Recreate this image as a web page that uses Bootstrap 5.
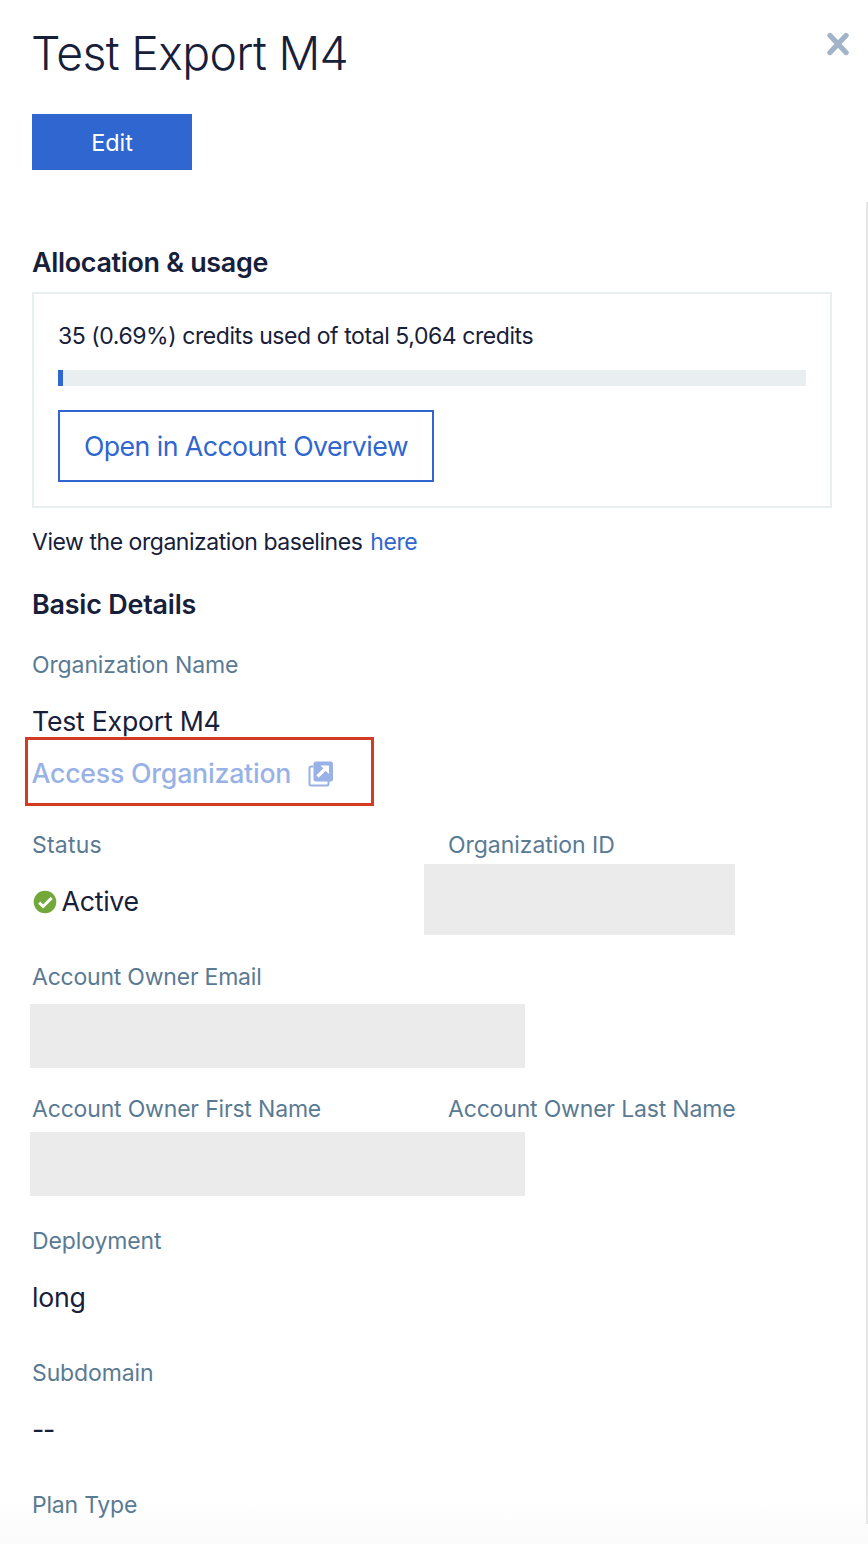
<!DOCTYPE html>
<html lang="en">
<head>
<meta charset="utf-8">
<meta name="viewport" content="width=device-width, initial-scale=1">
<title>Test Export M4</title>
<link href="https://cdn.jsdelivr.net/npm/bootstrap@5.3.0/dist/css/bootstrap.min.css" rel="stylesheet">
<style>
body{font-family:Inter,"Liberation Sans",sans-serif;color:#17203a;background:#fff;font-size:23px;line-height:32px;overflow:hidden}
.panel{width:868px;height:1544px;overflow:hidden;background:linear-gradient(#fff 1495px,#fbfbfb 1544px)}
.head{height:202px;padding:25px 18px 0 32px}
.panel-title{font-size:46.4px;font-weight:300;line-height:56px;letter-spacing:-.67px;margin-left:-1px}
.close-icon{margin-top:6px}
.btn{--bs-btn-border-radius:0;--bs-btn-border-width:2px}
.btn-edit{width:160px;height:56px;margin-top:33px;background:#3066d0;border:0;color:#fff;font-size:23.4px;padding:2px 0 0}
.btn-open{width:376px;height:72px;border-color:#3066d0;color:#3066d0;font-size:26.7px;letter-spacing:-.55px;padding:0}
.scroller{height:1322px;border-right:2px solid #e6e6e6;padding:44px 34px 0 32px}
.line{height:32px;white-space:nowrap}
.sect{font-size:26.9px;font-weight:600;line-height:30px;letter-spacing:-.3px;margin:0;padding-top:1px}
.usage{width:800px;height:216px;border:2px solid #e9eef1;border-radius:0;padding:26px 24px 0;margin-top:14px;background:transparent}
.credits{letter-spacing:-.43px}
.progress{height:16px;border-radius:0;background:#e9eef1;margin:18px 0 24px}
.progress-bar{background:#3066d0}
.baselines{margin-top:18px;letter-spacing:-.46px}
.lnk{color:#3066d0;text-decoration:none;margin-left:2px}
.basic{margin-top:30px;letter-spacing:-.2px}
.org{margin-top:29px}
.field{width:416px;height:132px}
.lbl{color:#5a7a94;letter-spacing:-.12px}
.ls-status{letter-spacing:.2px}
.ls-id{letter-spacing:-.04px}
.ls-email{letter-spacing:-.22px}
.ls-first{letter-spacing:-.18px}
.val{font-size:26.7px;line-height:30px;padding-top:1px;margin-top:24px;letter-spacing:-.25px}
.val svg{margin:1px -.5px 0 0}
.dashes{letter-spacing:-1.3px}
.access{width:349px;height:69px;margin:0 0 23px -7.5px;border:3px solid #d33c22;padding:3px 0 0 4px;font-size:26.7px;font-weight:500;color:#98b2e7;letter-spacing:-.22px}
.access svg{margin:1px 0 0 16.5px}
.redact{background:#ebebeb}
.r-id{width:311px;height:71px;margin:3px 0 0 -24px}
.r-wide{width:495px;height:64px;margin:11px 0 0 -2px}
.r-near{margin-top:7px}
</style>
</head>
<body>
<main class="panel">
<header class="head d-flex justify-content-between align-items-start">
  <div>
    <h1 class="panel-title mb-0">Test Export M4</h1>
    <button type="button" class="btn btn-edit">Edit</button>
  </div>
  <svg class="close-icon" width="24" height="26" viewBox="0 0 24 26" aria-label="Close"><path d="M4 4.500 20 21.500M20 4.500 4 21.500" stroke="#a2b4c8" stroke-width="5.4" stroke-linecap="round"/></svg>
</header>
<section class="scroller">
  <h2 class="sect line">Allocation &amp; usage</h2>
  <div class="card usage">
    <div class="line credits">35 (0.69%) credits used of total 5,064 credits</div>
    <div class="progress"><div class="progress-bar" style="width:.69%"></div></div>
    <a class="btn btn-open d-flex align-items-center justify-content-center">Open in Account Overview</a>
  </div>
  <div class="line baselines">View the organization baselines <a class="lnk">here</a></div>
  <h2 class="sect line basic">Basic Details</h2>
  <div class="org">
    <div class="line lbl">Organization Name</div>
    <div class="line val">Test Export M4</div>
  </div>
  <div class="access d-flex align-items-center">Access Organization
    <svg width="26" height="26" viewBox="0 0 26 26"><path d="M5.5 5.500H3A1.500 1.500 0 0 0 1.500 7v16A1.500 1.500 0 0 0 3 24.500h16A1.500 1.500 0 0 0 20.500 23V20" fill="none" stroke="#98b2e7" stroke-width="2"/><rect x="5.500" y=".5" width="19.500" height="20" rx="2.500" fill="#98b2e7"/><path d="M9.500 15.500 17 8" stroke="#fff" stroke-width="3.200"/><path d="M12.500 4.500h8.500v8.500z" fill="#fff"/></svg>
  </div>
  <div class="d-flex">
    <div class="field flex-shrink-0">
      <div class="line lbl ls-status">Status</div>
      <div class="line val d-flex"><svg class="flex-shrink-0" width="30" height="30" viewBox="0 0 30 30"><circle cx="13" cy="15" r="11.300" fill="#72a83a"/><path d="m7.200 15.600 3.900 3.900 8.600-8.600" fill="none" stroke="#fff" stroke-width="3"/></svg>Active</div>
    </div>
    <div class="field flex-shrink-0">
      <div class="line lbl ls-id">Organization ID</div>
      <div class="redact r-id"></div>
    </div>
  </div>
  <div class="field">
    <div class="line lbl ls-email">Account Owner Email</div>
    <div class="redact r-wide"></div>
  </div>
  <div class="d-flex">
    <div class="field flex-shrink-0">
      <div class="line lbl ls-first">Account Owner First Name</div>
      <div class="redact r-wide r-near"></div>
    </div>
    <div class="field flex-shrink-0"><div class="line lbl ls-first">Account Owner Last Name</div></div>
  </div>
  <div class="field"><div class="line lbl">Deployment</div><div class="line val">long</div></div>
  <div class="field"><div class="line lbl">Subdomain</div><div class="line val dashes">--</div></div>
  <div class="line lbl ls-email">Plan Type</div>
</section>
</main>
<script src="https://cdn.jsdelivr.net/npm/bootstrap@5.3.0/dist/js/bootstrap.bundle.min.js"></script>
</body>
</html>
